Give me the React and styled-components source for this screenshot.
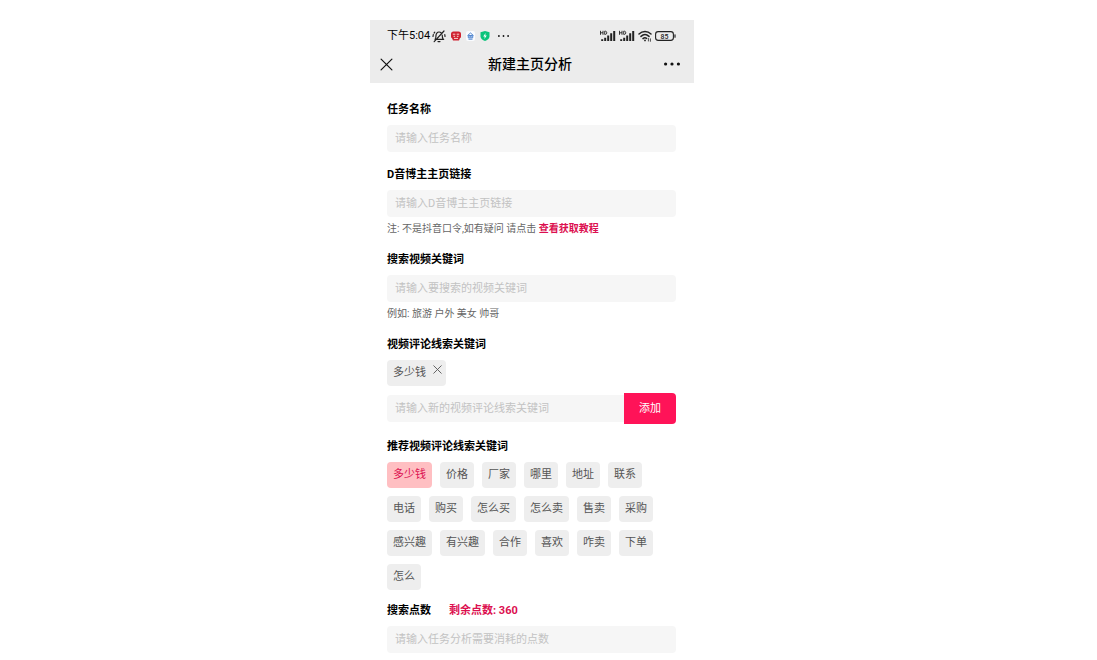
import React, { useState } from "react";
import styled, { createGlobalStyle } from "styled-components";

const GlobalStyle = createGlobalStyle`
  *, *::before, *::after { box-sizing: border-box; }
  body {
    margin: 0;
    background: #fff;
    color: #000;
    font-family: Roboto, "Noto Sans CJK SC", sans-serif;
    font-size: 11px;
    line-height: 16px;
  }
  button, input { font: inherit; }
`;

const Page = styled.div`
  padding: 20px 33px 0 0;
`;

const Phone = styled.main`
  width: 100%;
  max-width: 324px;
  margin: 0 auto;
`;

const Header = styled.header`
  padding-top: 7px;
  background: #ececec;
`;

const StatusBar = styled.div`
  display: flex;
  align-items: center;
  justify-content: space-between;
  height: 18px;
  padding: 0 18px 0 17px;
`;

const StatusGroup = styled.div`
  display: flex;
  align-items: center;
  gap: ${(p) => p.$gap}px;
`;

const NavBar = styled.div`
  display: grid;
  grid-template-columns: 1fr auto 1fr;
  align-items: center;
  height: 38px;
  padding: 0 14px 0 10px;
`;

const Title = styled.h1`
  margin: 0;
  font-size: 14px;
  line-height: 20px;
  font-weight: 500;
`;

const IconButton = styled.button`
  display: flex;
  justify-self: ${(p) => p.$side};
  padding: 0;
  border: 0;
  background: none;
  color: inherit;
  cursor: pointer;
`;

const Form = styled.form`
  display: flex;
  flex-direction: column;
  gap: 14px;
  padding: 18px 18px 7px 17px;
`;

const FieldGroup = styled.div`
  display: flex;
  flex-direction: column;
  gap: 12px;
`;

const Field = styled.div`
  display: flex;
  flex-direction: column;
`;

const Label = styled.label`
  margin-bottom: 6px;
  line-height: 18px;
  font-weight: 700;
`;

const Heading = styled.h2`
  margin: 0 0 6px;
  font-size: 11px;
  line-height: 18px;
  font-weight: 700;
`;

const LabelRow = styled.div`
  display: flex;
  gap: 18px;
`;

const Balance = styled.span`
  color: #dc0f50;
  line-height: 18px;
  font-weight: 700;
`;

const TextInput = styled.input`
  flex: 1 1 auto;
  min-width: 0;
  width: 100%;
  height: 27px;
  padding: 0 8px;
  border: 0;
  border-radius: ${(p) => (p.$joined ? "4px 0 0 4px" : "4px")};
  background: #f6f6f6;
  color: #333;
  &::placeholder { color: #c3c3c3; opacity: 1; }
`;

const Hint = styled.p`
  margin: 4px 0 0;
  color: #666;
  font-size: 10px;
`;

const GuideLink = styled.a`
  color: #dc0f50;
  font-weight: 700;
  text-decoration: none;
`;

const ChipList = styled.div`
  display: flex;
  flex-wrap: wrap;
  gap: 8px;
  padding-right: 20px;
`;

const Chip = styled.button`
  height: 26px;
  padding: 0 6px;
  border: 0;
  border-radius: 4px;
  background: ${(p) => (p.$active ? "#ffbfc2" : "#eee")};
  color: ${(p) => (p.$active ? "#dc0f50" : "#555")};
  cursor: pointer;
`;

const Tag = styled.span`
  display: flex;
  gap: 7px;
  height: 26px;
  padding: 5px 4px 5px 6px;
  border-radius: 4px;
  background: #eee;
  color: #555;
`;

const AddRow = styled.div`
  display: flex;
  align-items: center;
  margin-top: 7px;
`;

const AddButton = styled.button`
  flex: 0 0 52px;
  height: 31px;
  padding: 0;
  border: 0;
  border-radius: 0 4px 4px 0;
  background: #ff1358;
  color: #fff;
  cursor: pointer;
`;

const SUGGESTIONS = [
  "多少钱", "价格", "厂家", "哪里", "地址", "联系",
  "电话", "购买", "怎么买", "怎么卖", "售卖", "采购",
  "感兴趣", "有兴趣", "合作", "喜欢", "咋卖", "下单",
  "怎么",
];

const MutedBell = () => (
  <svg width="14" height="13" viewBox="0 0 14 13" fill="none" stroke="#222" strokeWidth="1.2" strokeLinecap="round">
    <path d="M3 9.4c.8-.9 1-2 1-3.800C4 3.600 5.200 2 7 2c.9 0 1.700.3 2.200.9M10.200 5c0 2 .2 3.200 1.100 4.400H5.200M6 11.600h2M12 1 2.200 11.700M1.300 4.500 1 6.500M2.800 2.200l-.7.800M12.800 4.600l.2 1.900" />
  </svg>
);

const RedApp = () => (
  <svg width="10" height="10" viewBox="0 0 10 10">
    <path d="M2.500.5h5A2.500 2.500 0 0 1 10 3v2.500c0 1-.6 1.600-1.200 1.900L8 9.500H2l-.8-2.100C.6 7.100 0 6.500 0 5.500V3A2.500 2.500 0 0 1 2.500.5Z" fill="#cf2230" />
    <path d="M1.800 3.200h2.500M5.700 3.200h2.500M2.500 5.300h1.600M5.900 5.300h1.600M3 7.400h4" stroke="#fbd5d0" strokeWidth="1" />
  </svg>
);

const BlueApp = () => (
  <svg width="9" height="10" viewBox="0 0 9 10">
    <rect width="9" height="10" rx="2" fill="#fafcff" />
    <path d="M1.500 4.600 4.500 2l3 2.600M2.300 4.500h4.400v2.300H2.300ZM3.300 5.700h2.400M2.500 8.200h4" stroke="#3d78c9" strokeWidth=".9" fill="none" />
  </svg>
);

const Shield = () => (
  <svg width="10" height="10" viewBox="0 0 10 10">
    <path d="M5 0 9.500 1.300v3.900C9.500 7.600 7.300 9.300 5 10 2.700 9.300.5 7.600.5 5.200V1.300Z" fill="#0cc47c" />
    <path d="M5.600 2 3.200 5.400h1.600L4.400 8l2.400-3.500H5.200Z" fill="#fff" />
  </svg>
);

const Dots = ({ width, span, r }) => (
  <svg width={width} height="6" viewBox={`0 0 ${width} 6`} fill="#111">
    <circle cx={width - span + r} cy="3" r={r} />
    <circle cx={width - span / 2} cy="3" r={r} />
    <circle cx={width - r} cy="3" r={r} />
  </svg>
);

const Signal = () => (
  <svg width="16" height="12" viewBox="0 0 16 12" fill="none" stroke="#222">
    <path d="M.5.800v4M3 .800v4M.5 2.800H3M4.700 1.200h.8c1.700 0 1.700 3.200 0 3.200h-.8Z" strokeWidth=".9" />
    <path d="M2.200 9.300V11M5.200 7.800V11M8.200 5.600V11M11.200 3.200V11M14.200 1V11" strokeWidth="2" />
  </svg>
);

const Wifi = () => (
  <svg width="14" height="12" viewBox="0 0 14 12" fill="none" stroke="#222" strokeWidth="1.500" strokeLinecap="round">
    <path d="M1 4c3.500-3.300 8.500-3.300 12 0M3 6.400c2.400-2.200 5.600-2.200 8 0M5 8.600c1.200-1 2.600-1 3.600-.2" />
    <circle cx="7" cy="10.400" r=".9" fill="#222" stroke="none" />
    <path d="M10.400 8.500v2.500M12.400 8.800v2.500" strokeWidth=".8" />
  </svg>
);

const Battery = () => (
  <svg width="21" height="10" viewBox="0 0 21 10" role="img" aria-label="85%">
    <rect x=".6" y=".6" width="17.800" height="8.800" rx="2.600" fill="none" stroke="#222" strokeWidth="1.100" />
    <path d="M20 3.800v2.400" stroke="#222" strokeWidth="1.200" strokeLinecap="round" />
    <text x="9.500" y="7.500" textAnchor="middle" fontSize="7" fontWeight="500" fill="#222">85</text>
  </svg>
);

const Cross = ({ size, color, weight }) => (
  <svg width={size} height={size} viewBox="0 0 12 12" fill="none" stroke={color} strokeWidth={weight} strokeLinecap="round">
    <path d="m1 1 10 10M11 1 1 11" />
  </svg>
);

const TextField = ({ id, label, placeholder, children }) => (
  <Field>
    <Label htmlFor={id}>{label}</Label>
    <TextInput id={id} placeholder={placeholder} />
    {children}
  </Field>
);

export default function App() {
  const [keywords, setKeywords] = useState(["多少钱"]);
  const [draft, setDraft] = useState("");

  const add = (word) => {
    if (word && !keywords.includes(word)) setKeywords([...keywords, word]);
  };
  const remove = (word) => setKeywords(keywords.filter((k) => k !== word));

  return (
    <>
      <GlobalStyle />
      <Page>
        <Phone>
          <Header>
            <StatusBar>
              <StatusGroup $gap={5}>
                <StatusGroup $gap={2}>
                  <span>下午5:04</span>
                  <MutedBell />
                </StatusGroup>
                <RedApp />
                <BlueApp />
                <Shield />
                <Dots width={14} span={11} r={0.9} />
              </StatusGroup>
              <StatusGroup $gap={3}>
                <Signal />
                <Signal />
                <Wifi />
                <Battery />
              </StatusGroup>
            </StatusBar>
            <NavBar>
              <IconButton type="button" $side="start" aria-label="关闭">
                <Cross size={13} color="#111" weight={1.1} />
              </IconButton>
              <Title>新建主页分析</Title>
              <IconButton type="button" $side="end" aria-label="更多">
                <Dots width={16} span={16} r={1.6} />
              </IconButton>
            </NavBar>
          </Header>

          <Form onSubmit={(e) => e.preventDefault()}>
            <TextField id="task" label="任务名称" placeholder="请输入任务名称" />
            <TextField id="link" label="D音博主主页链接" placeholder="请输入D音博主主页链接">
              <Hint>
                注: 不是抖音口令,如有疑问 请点击 <GuideLink href="#guide">查看获取教程</GuideLink>
              </Hint>
            </TextField>
            <TextField id="search" label="搜索视频关键词" placeholder="请输入要搜索的视频关键词">
              <Hint>例如: 旅游 户外 美女 帅哥</Hint>
            </TextField>

            <Field>
              <Label htmlFor="keyword">视频评论线索关键词</Label>
              <ChipList>
                {keywords.map((word) => (
                  <Tag key={word}>
                    {word}
                    <IconButton type="button" $side="end" aria-label={`删除${word}`} onClick={() => remove(word)}>
                      <Cross size={9} color="#555" weight={1.2} />
                    </IconButton>
                  </Tag>
                ))}
              </ChipList>
              <AddRow>
                <TextInput
                  id="keyword"
                  $joined
                  placeholder="请输入新的视频评论线索关键词"
                  value={draft}
                  onChange={(e) => setDraft(e.target.value)}
                />
                <AddButton type="button" onClick={() => { add(draft.trim()); setDraft(""); }}>
                  添加
                </AddButton>
              </AddRow>
            </Field>

            <FieldGroup>
              <Field>
                <Heading>推荐视频评论线索关键词</Heading>
                <ChipList>
                  {SUGGESTIONS.map((word) => (
                    <Chip key={word} type="button" $active={keywords.includes(word)} onClick={() => add(word)}>
                      {word}
                    </Chip>
                  ))}
                </ChipList>
              </Field>

              <Field>
                <LabelRow>
                  <Label htmlFor="points">搜索点数</Label>
                  <Balance>剩余点数: 360</Balance>
                </LabelRow>
                <TextInput id="points" placeholder="请输入任务分析需要消耗的点数" />
              </Field>
            </FieldGroup>
          </Form>
        </Phone>
      </Page>
    </>
  );
}
